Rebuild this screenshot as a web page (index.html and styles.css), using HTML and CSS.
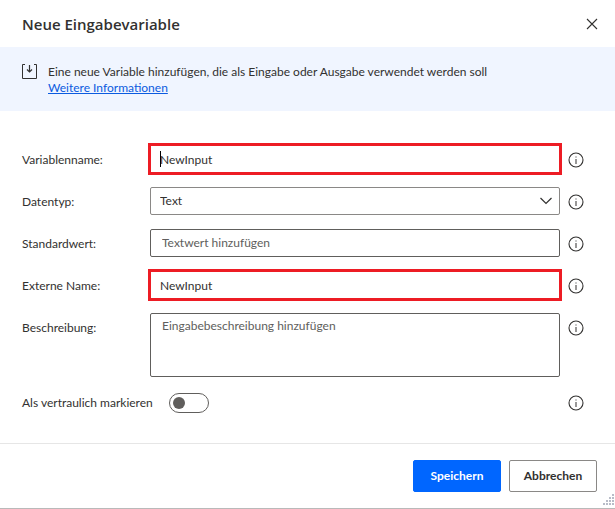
FILE: index.html
```html
<!DOCTYPE html>
<html lang="de">
<head>
<meta charset="utf-8">
<meta name="viewport" content="width=device-width, initial-scale=1">
<title>Neue Eingabevariable</title>
<link rel="stylesheet" href="styles.css">
</head>
<body>
<svg class="symbols" aria-hidden="true">
  <symbol id="info" viewBox="0 0 16 16">
    <circle cx="8" cy="8" r="7" fill="none" stroke="currentColor" stroke-width="1.1"/>
    <path d="M7.5 4.5h1v1h-1zM7.5 7h1v5h-1z" fill="currentColor"/>
  </symbol>
</svg>
<main class="dialog">
  <header class="header">
    <h1 class="title">Neue Eingabevariable</h1>
    <button class="icon-button" type="button" aria-label="Schließen">
      <svg width="12" height="12" viewBox="0 0 12 12"><path d="M1 1l10 10M11 1L1 11" fill="none" stroke="currentColor" stroke-width="1.1"/></svg>
    </button>
  </header>
  <section class="banner">
    <svg class="banner-icon" width="16" height="16" viewBox="0 0 16 16" fill="none" stroke="currentColor">
      <path d="M3 .5H.5v14h14V.5H12"/>
      <path d="M7.500 1v7M5 5.500L7.500 8l2.500-2.500" stroke-width="1.2"/>
    </svg>
    <div>
      <p class="banner-text">Eine neue Variable hinzufügen, die als Eingabe oder Ausgabe verwendet werden soll</p>
      <a class="link" href="#">Weitere Informationen</a>
    </div>
  </section>
  <form class="form" id="variable-form">
    <div class="row">
      <label class="label" for="name">Variablenname:</label>
      <div class="control"><input class="field marked" id="name" type="text" value="NewInput"><span class="caret"></span></div>
      <button class="icon-button" type="button" aria-label="Info"><svg width="16" height="16"><use href="#info"/></svg></button>
    </div>
    <div class="row">
      <label class="label" for="type">Datentyp:</label>
      <div class="control">
        <select class="field select" id="type"><option>Text</option></select>
        <svg class="chevron" width="12" height="8" viewBox="0 0 12 8"><path d="M.5 1L6 6.500 11.500 1" fill="none" stroke="currentColor" stroke-width="1.2"/></svg>
      </div>
      <button class="icon-button" type="button" aria-label="Info"><svg width="16" height="16"><use href="#info"/></svg></button>
    </div>
    <div class="row">
      <label class="label" for="default">Standardwert:</label>
      <div class="control"><input class="field hinted" id="default" type="text" placeholder="Textwert hinzufügen"></div>
      <button class="icon-button" type="button" aria-label="Info"><svg width="16" height="16"><use href="#info"/></svg></button>
    </div>
    <div class="row">
      <label class="label" for="external">Externe Name:</label>
      <div class="control"><input class="field marked" id="external" type="text" value="NewInput"></div>
      <button class="icon-button" type="button" aria-label="Info"><svg width="16" height="16"><use href="#info"/></svg></button>
    </div>
    <div class="row">
      <label class="label" for="description">Beschreibung:</label>
      <div class="control"><textarea class="field hinted area" id="description" placeholder="Eingabebeschreibung hinzufügen"></textarea></div>
      <button class="icon-button" type="button" aria-label="Info"><svg width="16" height="16"><use href="#info"/></svg></button>
    </div>
    <div class="toggle-row">
      <label for="sensitive">Als vertraulich markieren</label>
      <input class="toggle" id="sensitive" type="checkbox" role="switch">
      <button class="icon-button push" type="button" aria-label="Info"><svg width="16" height="16"><use href="#info"/></svg></button>
    </div>
  </form>
  <footer class="footer">
    <button class="button primary" type="submit" form="variable-form">Speichern</button>
    <button class="button" type="button">Abbrechen</button>
    <svg class="grip" width="12" height="12" viewBox="0 0 12 12" fill="#b8bcc8">
      <path d="M9 0h2v2H9zM6 3h2v2H6zM9 3h2v2H9zM3 6h2v2H3zM6 6h2v2H6zM9 6h2v2H9zM0 9h2v2H0zM3 9h2v2H3zM6 9h2v2H6zM9 9h2v2H9z"/>
    </svg>
  </footer>
</main>
</body>
</html>
```
FILE: styles.css
```css
* {
  box-sizing: border-box;
}

body {
  margin: 0;
  background: #fff;
  color: #323130;
  font: 12px/16px Lato, "Segoe UI", sans-serif;
}

.symbols {
  display: none;
}

.dialog {
  display: flex;
  flex-direction: column;
  min-height: 100vh;
  border-bottom: 1px solid #b9b9b9;
}

.header {
  display: flex;
  align-items: center;
  justify-content: space-between;
  height: 47px;
  padding: 0 15px 0 22px;
}

.title {
  margin: 0;
  font-family: "Open Sans", "Segoe UI", sans-serif;
  font-size: 15px;
  line-height: 20px;
  font-weight: 600;
}

.icon-button {
  display: grid;
  place-items: center;
  width: 16px;
  height: 28px;
  padding: 0;
  border: 0;
  background: none;
  color: #323130;
}

.banner {
  display: flex;
  gap: 10px;
  padding: 17px 22px 15px;
  background: #f0f5ff;
}

.banner-text {
  margin: 0;
}

.link {
  color: #0b5be0;
}

.form {
  display: flex;
  flex-direction: column;
  gap: 14px;
  padding: 34px 31px 28px 22px;
}

.row {
  display: grid;
  grid-template-columns: 128px 1fr 16px;
  align-items: start;
}

.row .icon-button {
  padding-top: 2px;
}

.label {
  padding-top: 2px;
  line-height: 26px;
}

.control {
  position: relative;
  display: flex;
  margin-right: 8px;
}

.field {
  width: 100%;
  height: 28px;
  padding: 0 9px;
  border: 1px solid #605e5c;
  border-radius: 2px;
  background: #fff;
  color: #323130;
  font: inherit;
}

.marked {
  border-color: #fff;
  border-radius: 0;
  outline: 3px solid #ed1c24;
  outline-offset: -1px;
}

.select {
  appearance: none;
  border-color: #8a8886;
}

.hinted {
  padding: 0 11px 2px;
}

.hinted::placeholder {
  color: #605e5c;
  opacity: 1;
}

.area {
  height: 64px;
  padding-top: 4px;
  resize: none;
}

.chevron {
  position: absolute;
  top: 10px;
  right: 8px;
  pointer-events: none;
}

.caret {
  position: absolute;
  top: 6px;
  left: 10px;
  width: 1px;
  height: 16px;
  background: #000;
}

.toggle-row {
  display: flex;
  align-items: center;
  gap: 16px;
  height: 24px;
}

.toggle {
  appearance: none;
  display: flex;
  align-items: center;
  width: 40px;
  height: 20px;
  margin: 0;
  padding: 0 3px;
  border: 1px solid #605e5c;
  border-radius: 10px;
}

.toggle::before {
  content: "";
  width: 12px;
  height: 12px;
  border-radius: 50%;
  background: #605e5c;
}

.push {
  margin-left: auto;
}

.footer {
  position: relative;
  display: flex;
  flex: 1;
  justify-content: flex-end;
  align-items: flex-start;
  gap: 8px;
  padding: 16px 18px 16px;
  border-top: 1px solid #e6e6e6;
}

.button {
  width: 88px;
  height: 32px;
  padding: 0;
  border: 1px solid #8a8886;
  border-radius: 2px;
  background: #fff;
  color: #323130;
  font: inherit;
  font-weight: 700;
}

.primary {
  border-color: #0066ff;
  background: #0066ff;
  color: #fff;
}

.grip {
  position: absolute;
  right: 0;
  bottom: 2px;
}
```
